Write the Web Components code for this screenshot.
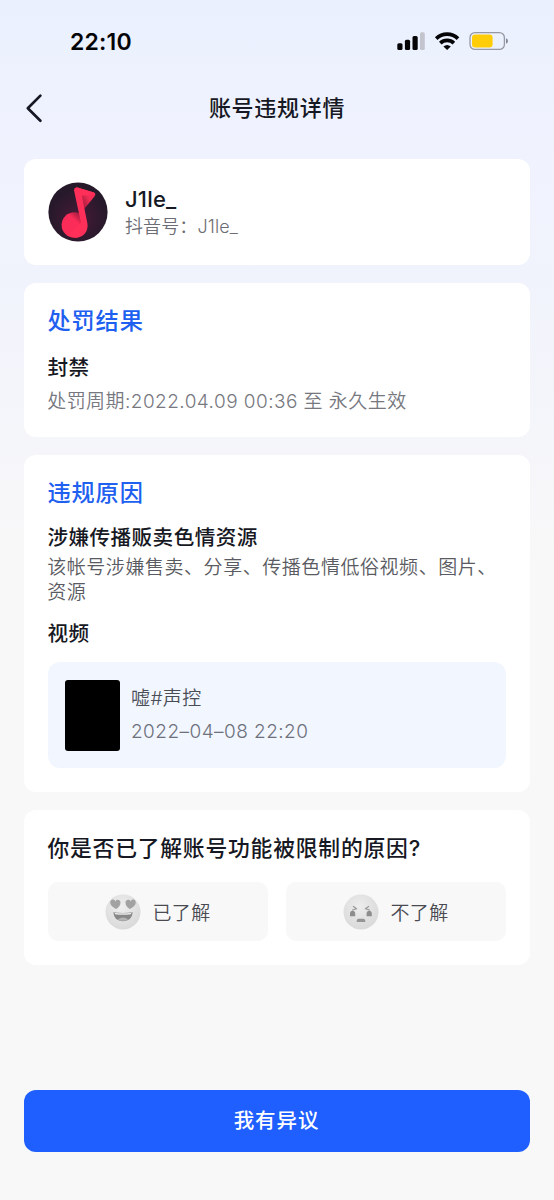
<!DOCTYPE html>
<html lang="zh-CN">
<head>
<meta charset="utf-8">
<title>账号违规详情</title>
<style>
html,body{margin:0;height:100%}
body{font-family:Inter,"Noto Sans CJK SC",sans-serif;color:#161823}
</style>
</head>
<body>
<violation-page></violation-page>
<script>
function define(name, markup) {
  const template = document.createElement('template');
  template.innerHTML = markup;
  customElements.define(name, class extends HTMLElement {
    constructor() {
      super();
      this.attachShadow({ mode: 'open' }).appendChild(template.content.cloneNode(true));
    }
  });
}

define('status-bar', `
<style>
:host{display:flex;justify-content:space-between;align-items:center;height:82px;padding:0 46px 0 70px;box-sizing:border-box;color:#050508}
time{font-size:23px;font-weight:600;letter-spacing:.2px;line-height:30px;padding-top:1px}
svg{display:block}
</style>
<time>22:10</time>
<svg width="111" height="20" viewBox="397 31 111 20">
  <g fill="#050508"><rect x="397.3" y="43.3" width="5.2" height="6.7" rx="1.5"/><rect x="404.9" y="39.8" width="5.2" height="10.2" rx="1.5"/><rect x="412.5" y="36" width="5.2" height="14" rx="1.5"/></g>
  <rect x="420" y="32.2" width="4.8" height="17.8" rx="1.5" fill="#c3c5ce"/>
  <g fill="none" stroke="#050508" stroke-width="3.7"><path d="M436.2 38.6a15.7 15.7 0 0 1 21.8 0"/><path d="M440.3 43.1a9.8 9.8 0 0 1 13.6 0"/></g>
  <path d="M443.4 46.4q3.7-3 7.4 0l-3.7 3.7z" fill="#050508"/>
  <rect x="470" y="32.6" width="34.4" height="16.8" rx="5" fill="none" stroke="#9699a4" stroke-width="1.3"/>
  <rect x="472" y="34.6" width="20.6" height="12.8" rx="3.2" fill="#ffcc08"/>
  <path d="M506 38.2q2 .8 2 2.8t-2 2.8z" fill="#858894"/>
</svg>`);

define('nav-bar', `
<style>
:host{display:grid;grid-template-columns:60px 1fr 60px;align-items:center;height:52px}
svg{display:block;margin-left:24px}
h1{margin:0;text-align:center;font-size:22px;font-weight:500;letter-spacing:.7px;line-height:30px}
</style>
<svg width="20" height="30" viewBox="0 0 20 30" fill="none" stroke="#161823" stroke-width="2.7" stroke-linecap="round" stroke-linejoin="round"><path d="M16.4 2.6L3.8 15.2l12.6 12.6"/></svg>
<h1><slot></slot></h1><span></span>`);

define('info-card', `
<style>
:host{display:block;box-sizing:border-box;background:#fff;border-radius:12px;padding:22px 24px 24px}
</style><slot></slot>`);

define('section-title', `
<style>:host{display:block;margin-left:-.6px;font-size:23.2px;font-weight:500;letter-spacing:.9px;line-height:32px;color:#2060f0}</style><slot></slot>`);

define('item-title', `
<style>:host{display:block;margin-left:-.6px;font-size:20.6px;font-weight:500;letter-spacing:.45px;line-height:28px}</style><slot></slot>`);

define('item-note', `
<style>:host{display:block;margin-left:-.8px;font-size:19px;font-weight:350;letter-spacing:.55px;line-height:25px;color:#5a5b62;white-space:nowrap}</style><slot></slot>`);

define('music-avatar', `
<style>:host{display:block;width:60px;height:60px}svg{display:block}</style>
<svg width="60" height="60" viewBox="0 0 60 60">
  <defs>
    <radialGradient id="bg" cx=".5" cy=".6" r=".5"><stop offset="0" stop-color="#481a37"/><stop offset="1" stop-color="#25192a"/></radialGradient>
    <linearGradient id="flag" x1=".1" y1=".7" x2=".9" y2=".2"><stop offset="0" stop-color="#8d1636"/><stop offset=".65" stop-color="#f32d55"/></linearGradient>
    <linearGradient id="disc" x1=".8" y1=".05" x2=".4" y2=".5"><stop offset="0" stop-color="#8e1739"/><stop offset=".65" stop-color="#fb2c57"/></linearGradient>
  </defs>
  <circle cx="30" cy="30" r="29.6" fill="url(#bg)"/>
  <path d="M28 5L45.8 10.6Q48.4 11.8 46.6 14.2L35 28.5Z" fill="url(#flag)"/>
  <circle cx="26.4" cy="43" r="12.8" fill="url(#disc)"/>
  <path d="M26 8.3Q26.2 4.8 29.5 5.5L46 10.6Q48 11.6 46.8 13.2L33.8 13.6L39.4 41.5C40.6 49.5 35.5 55.5 27.5 55.8L19 53.5L33 41Z" fill="#ff2f59"/>
</svg>`);

define('user-profile', `
<style>
:host{display:flex;align-items:center;gap:17px}
.name{font-size:22px;font-weight:500;line-height:30px;letter-spacing:.2px}
.id{font-size:18px;font-weight:350;line-height:26px;color:#6c6d74;letter-spacing:.1px}
</style>
<music-avatar></music-avatar>
<div><div class="name"><slot name="name"></slot></div><div class="id"><slot name="id"></slot></div></div>`);

define('video-item', `
<style>
:host{display:flex;align-items:center;gap:11px;height:106px;box-sizing:border-box;padding-left:17px;background:#f1f6ff;border-radius:12px}
.thumb{width:55px;height:71px;border-radius:3px;background:#000}
.title{font-size:19px;font-weight:350;letter-spacing:.4px;line-height:33px;color:#4a4c56}
.date{font-size:19px;font-weight:350;letter-spacing:.45px;line-height:33px;color:#6e717c}
</style>
<div class="thumb"></div>
<div><div class="title"><slot name="title"></slot></div><div class="date"><slot name="date"></slot></div></div>`);

define('choice-button', `
<style>
:host{display:flex;align-items:center;justify-content:center;gap:11px;height:59px;background:#f8f8f8;border-radius:10px;font-size:19px;font-weight:350;letter-spacing:.4px;color:#4a4b52}
</style><slot name="icon"></slot><span><slot></slot></span>`);

define('face-love', `
<style>:host{display:block;width:36px;height:36px}svg{display:block}</style>
<svg width="36" height="36" viewBox="0 0 36 36">
  <defs><radialGradient id="f" cx=".45" cy=".35" r=".65"><stop offset="0" stop-color="#efefef"/><stop offset="1" stop-color="#d9d9d9"/></radialGradient></defs>
  <circle cx="18" cy="18" r="17.5" fill="url(#f)"/>
  <path d="M11.2 15C7 13 4.6 10.2 5.4 7.5C6.3 4.7 9.6 5.1 10.4 7.4C11.8 4.9 15.3 5.6 15.5 8.5C15.6 11.2 13.6 13.5 11.2 15Z" fill="#a2a2a2"/>
  <path d="M24.8 15C29 13 31.4 10.2 30.6 7.5C29.7 4.7 26.4 5.1 25.6 7.4C24.2 4.9 20.7 5.6 20.5 8.5C20.4 11.2 22.4 13.5 24.8 15Z" fill="#a2a2a2"/>
  <path d="M8.3 18.3Q18 19.5 27.7 18.3Q27 27.2 18 27.2T8.3 18.3Z" fill="#888"/>
  <path d="M9.6 18.7Q18 19.9 26.4 18.7L26 20.2Q18 21.4 10 20.2Z" fill="#e8e8e8"/>
  <path d="M12.8 25.6Q18 21.6 23.2 25.6Q18 28 12.8 25.6Z" fill="#b4b4b4"/>
</svg>`);

define('face-upset', `
<style>:host{display:block;width:36px;height:36px}svg{display:block}</style>
<svg width="36" height="36" viewBox="0 0 36 36">
  <defs><radialGradient id="f" cx=".45" cy=".35" r=".65"><stop offset="0" stop-color="#ededed"/><stop offset="1" stop-color="#d9d9d9"/></radialGradient></defs>
  <circle cx="18" cy="18" r="17.5" fill="url(#f)"/>
  <g fill="none" stroke="#9a9a9a" stroke-width="1.3" stroke-linecap="round" stroke-linejoin="round"><path d="M10.4 12.5L13.6 14.7L9.6 16"/><path d="M25.6 12.5L22.4 14.7L26.4 16"/></g>
  <path d="M7 22.3V19.5Q7.2 16.7 9.6 16.7T12.2 19.5V22.3ZM23.6 22.3V19.5Q23.8 16.7 26.2 16.7T28.8 19.5V22.3Z" fill="#8d8d8d"/>
  <path d="M13.6 28Q13.6 24.8 15.8 24.8H20.2Q22.4 24.8 22.4 28Z" fill="#959595"/>
</svg>`);

define('primary-button', `
<style>
:host{display:block}
button{display:block;width:100%;height:62px;margin:0;padding:0 1px 0 0;border:0;border-radius:12px;background:#1f5eff;color:#fff;font:500 20.5px/62px Inter,"Noto Sans CJK SC",sans-serif;letter-spacing:.9px}
</style><button><slot></slot></button>`);

define('violation-page', `
<style>
:host{display:flex;flex-direction:column;height:1200px;box-sizing:border-box;background:linear-gradient(#eaf0fe 0,#f0f3fe 150px,#f1f3fc 280px,#f8f8f8 560px)}
main{display:flex;flex-direction:column;gap:18px;padding:25px 24px 0}
.profile{padding:23px 24px}
.result{height:154px}.reason{height:337px}.feedback{height:155px;padding-top:23px}
.t1{margin-top:17px}.n1{margin-top:7px;color:#77787f;letter-spacing:.45px}
.t2{margin-top:15px}.n2{margin-top:3px}.t3{margin-top:15px}
video-item{margin-top:14px}
.choices{display:grid;grid-template-columns:1fr 1fr;gap:18px;margin-top:19px}
.question{font-size:21.8px;line-height:30px;letter-spacing:.78px}
footer{margin-top:auto;padding:0 24px 48px}
</style>
<status-bar></status-bar>
<nav-bar>账号违规详情</nav-bar>
<main>
  <info-card class="profile"><user-profile><span slot="name">J1le_</span><span slot="id">抖音号：J1le_</span></user-profile></info-card>
  <info-card class="result">
    <section-title>处罚结果</section-title>
    <item-title class="t1">封禁</item-title>
    <item-note class="n1">处罚周期:2022.04.09 00:36 至 永久生效</item-note>
  </info-card>
  <info-card class="reason">
    <section-title>违规原因</section-title>
    <item-title class="t2">涉嫌传播贩卖色情资源</item-title>
    <item-note class="n2">该帐号涉嫌售卖、分享、传播色情低俗视频、图片、<br>资源</item-note>
    <item-title class="t3">视频</item-title>
    <video-item><span slot="title">嘘#声控</span><span slot="date">2022–04–08 22:20</span></video-item>
  </info-card>
  <info-card class="feedback">
    <item-title class="question">你是否已了解账号功能被限制的原因?</item-title>
    <div class="choices">
      <choice-button><face-love slot="icon"></face-love>已了解</choice-button>
      <choice-button><face-upset slot="icon"></face-upset>不了解</choice-button>
    </div>
  </info-card>
</main>
<footer><primary-button>我有异议</primary-button></footer>`);
</script>
</body>
</html>
